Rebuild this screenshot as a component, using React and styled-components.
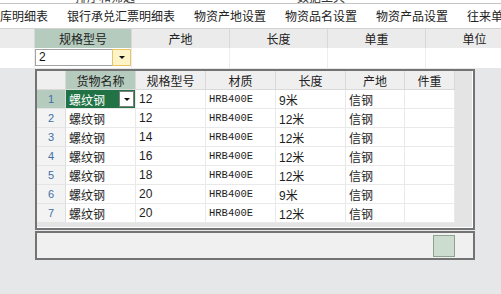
import React from "react";
import styled, { createGlobalStyle } from "styled-components";

const GlobalStyle = createGlobalStyle`
  html, body {
    margin: 0;
    padding: 0;
  }
  body {
    width: 501px;
    height: 294px;
    overflow: hidden;
    background: #e6e7e8;
    font-family: "Liberation Sans", "Noto Sans CJK SC", sans-serif;
    font-size: 12px;
    color: #1e1e1e;
  }
  * {
    box-sizing: border-box;
  }
`;

const tabs = ["库明细表", "银行承兑汇票明细表", "物资产地设置", "物资品名设置", "物资产品设置", "往来单位设置"];
const filterCols = [
  { label: "", w: 35 },
  { label: "规格型号", w: 97, active: true },
  { label: "产地", w: 98 },
  { label: "长度", w: 98 },
  { label: "单重", w: 98 },
  { label: "单位", w: 98 },
];
const gridCols = ["货物名称", "规格型号", "材质", "长度", "产地", "件重"];
const rows = [
  ["螺纹钢", "12", "HRB400E", "9米", "信钢", ""],
  ["螺纹钢", "12", "HRB400E", "12米", "信钢", ""],
  ["螺纹钢", "14", "HRB400E", "12米", "信钢", ""],
  ["螺纹钢", "16", "HRB400E", "12米", "信钢", ""],
  ["螺纹钢", "18", "HRB400E", "12米", "信钢", ""],
  ["螺纹钢", "20", "HRB400E", "9米", "信钢", ""],
  ["螺纹钢", "20", "HRB400E", "12米", "信钢", ""],
];

function App() {
  return (
    <>
      <GlobalStyle />
      <RibbonStrip>
        <RibbonLabel>排序和筛选</RibbonLabel>
        <RibbonLabel>数据工具</RibbonLabel>
      </RibbonStrip>
      <TabBar>
        {tabs.map((t) => (
          <Tab key={t}>{t}</Tab>
        ))}
      </TabBar>
      <FilterGrid>
        {filterCols.map((c, i) => (
          <FilterHead key={i} $active={c.active}>
            {c.label}
          </FilterHead>
        ))}
        {filterCols.map((c, i) => (
          <FilterCell key={i}>
            {c.active && (
              <Combo>
                <ComboText>2</ComboText>
                <ComboButton>
                  <Arrow />
                </ComboButton>
              </Combo>
            )}
          </FilterCell>
        ))}
      </FilterGrid>
      <Frame>
        <Grid>
          <HeadCell />
          {gridCols.map((c, i) => (
            <HeadCell key={c} $active={i === 0}>
              {c}
            </HeadCell>
          ))}
          {rows.map((r, ri) => (
            <React.Fragment key={ri}>
              <RowNum $active={ri === 0}>{ri + 1}</RowNum>
              {r.map((v, ci) => (
                <Cell key={ci} $selected={ri === 0 && ci === 0} $mono={ci === 2}>
                  {v}
                  {ri === 0 && ci === 0 && (
                    <CellButton>
                      <Arrow />
                    </CellButton>
                  )}
                </Cell>
              ))}
            </React.Fragment>
          ))}
        </Grid>
      </Frame>
      <Footer>
        <Swatch />
      </Footer>
    </>
  );
}

const RibbonStrip = styled.div`
  height: 4px;
  overflow: hidden;
  background: #fff;
  border-bottom: 1px solid #c4c4c4;
  display: flex;
  gap: 162px;
  padding-left: 75px;
`;

const RibbonLabel = styled.span`
  font-family: "Noto Sans CJK SC", sans-serif;
  font-size: 12px;
  line-height: 12px;
  margin-top: -9px;
  color: #333;
`;

const TabBar = styled.div`
  height: 25px;
  background: #fff;
  border-bottom: 1px solid #d2d2d2;
  display: flex;
  align-items: center;
  margin-left: -9.5px;
  white-space: nowrap;
  overflow: hidden;
`;

const Tab = styled.div`
  padding: 0 9.5px;
  font-family: "Noto Sans CJK SC", sans-serif;
  font-size: 12px;
  color: #222;
  line-height: 16px;
`;

const FilterGrid = styled.div`
  display: grid;
  grid-template-columns: 35px 97px 98px 98px 98px 98px;
  grid-template-rows: 19px 20px;
  background: #fff;
  white-space: nowrap;
`;

const FilterHead = styled.div`
  background: ${(p) => (p.$active ? "#b5cbbd" : "#ebebeb")};
  border-right: 1px solid #d8d8d8;
  display: flex;
  align-items: center;
  justify-content: center;
  font-family: "Noto Sans CJK SC", sans-serif;
  color: #222;
`;

const FilterCell = styled.div`
  border-right: 1px solid #ededed;
  padding: 1px 0 2px;
`;

const Combo = styled.div`
  display: flex;
  height: 17px;
`;

const ComboText = styled.div`
  flex: 1;
  border: 1px solid #a3a3a3;
  border-right: none;
  padding-left: 3px;
  font-size: 12px;
  line-height: 15px;
  color: #111;
`;

const ComboButton = styled.div`
  width: 19px;
  background: #fff3c8;
  border: 1px solid #e7c467;
  display: flex;
  align-items: center;
  justify-content: center;
`;

const Arrow = styled.span`
  width: 0;
  height: 0;
  border-left: 3px solid transparent;
  border-right: 3px solid transparent;
  border-top: 3px solid #111;
`;

const Frame = styled.div`
  width: 440px;
  height: 161px;
  margin: 1px 0 0 35px;
  border: 2px solid #737373;
  box-shadow: inset -1px -1px 0 #fff;
  background: #e4e4e4;
`;

const Grid = styled.div`
  display: grid;
  grid-template-columns: 29px 70px 70px 70px 70px 59px 50px;
  grid-auto-rows: 19px;
  width: 418px;
  white-space: nowrap;
`;

const HeadCell = styled.div`
  background: ${(p) => (p.$active ? "#b5cbbd" : "#efefef")};
  border-right: 1px solid #d9d9d9;
  border-bottom: 1px solid #d9d9d9;
  display: flex;
  align-items: center;
  justify-content: center;
  font-family: "Noto Sans CJK SC", sans-serif;
  color: #222;
`;

const RowNum = styled.div`
  background: ${(p) => (p.$active ? "#b5cbbd" : "#f3f3f3")};
  border-right: 1px solid #dddddd;
  border-bottom: 1px solid #e4e4e4;
  display: flex;
  align-items: center;
  justify-content: center;
  color: #3d6fa6;
  font-size: 11px;
`;

const Cell = styled.div`
  background: ${(p) => (p.$selected ? "#217346" : "#fff")};
  color: ${(p) => (p.$selected ? "#fff" : "#1e1e1e")};
  border-right: 1px solid #e9e9e9;
  border-bottom: 1px solid #e9e9e9;
  display: flex;
  align-items: center;
  justify-content: space-between;
  padding: 0 1px 0 3px;
  font-family: ${(p) =>
    p.$mono ? '"Liberation Mono", monospace' : '"Liberation Sans", "Noto Sans CJK SC", sans-serif'};
  font-size: ${(p) => (p.$mono ? "10.5px" : "12px")};
`;

const CellButton = styled.div`
  width: 15px;
  height: 16px;
  background: #fff;
  border: 1px solid #808080;
  display: flex;
  align-items: center;
  justify-content: center;
`;

const Footer = styled.div`
  width: 440px;
  height: 29px;
  margin: 1px 0 0 35px;
  border: 2px solid #737373;
  background: #f0f0f0;
  display: flex;
  align-items: center;
  justify-content: flex-end;
  padding-right: 18px;
`;

const Swatch = styled.div`
  width: 22px;
  height: 22px;
  background: #ccdcce;
  border: 1px solid #8ea28f;
`;

export default App;
